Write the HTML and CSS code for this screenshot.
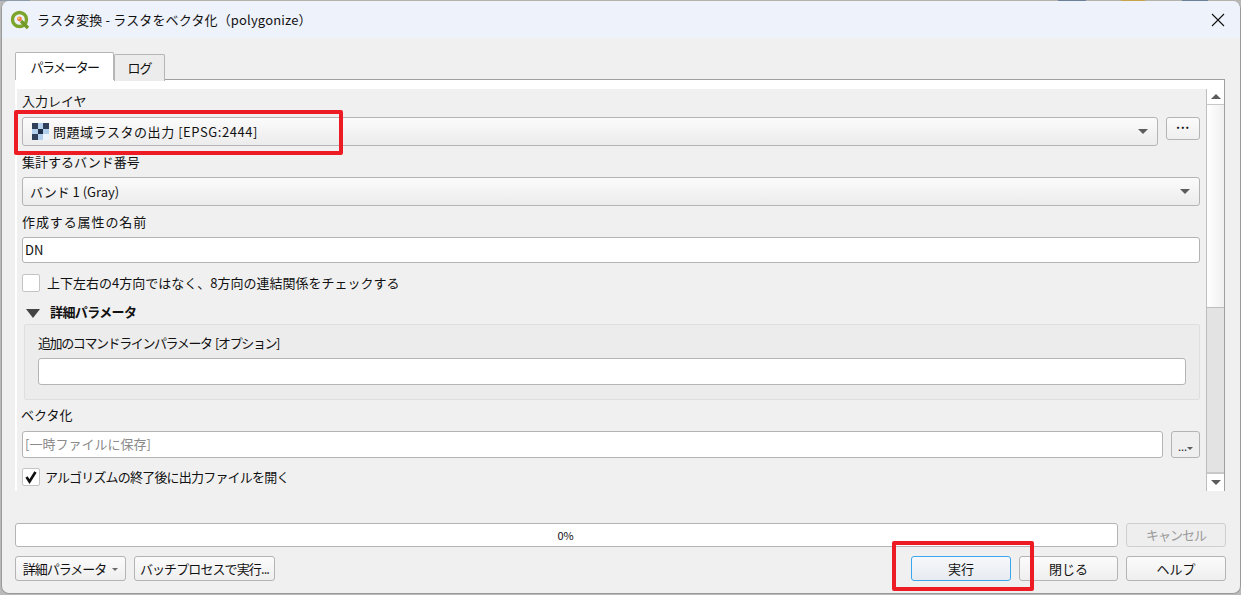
FILE: index.html
```html
<!DOCTYPE html>
<html lang="ja">

<head>
    <meta charset="UTF-8">
    <title>ラスタ変換 - ラスタをベクタ化（polygonize）</title>
    <link rel="stylesheet" href="styles.css">
</head>

<body>
    <div class="desktop-strip"></div>
    <div class="window">
        <!-- Title bar -->
        <div class="titlebar">
            <svg class="app-icon" width="20" height="20" viewBox="0 0 20 20">
                <circle cx="9.5" cy="9.5" r="7" fill="none" stroke="#7da52c" stroke-width="3.4"/>
                <path d="M11 11 L18 18" stroke="#6f9a28" stroke-width="3.4"/>
                <circle cx="9.5" cy="9" r="2.4" fill="#ee7d3b"/>
                <circle cx="8.8" cy="8.2" r="1" fill="#f7d774"/>
            </svg>
            <span class="title-text">ラスタ変換 - ラスタをベクタ化（polygonize）</span>
            <svg class="close-icon" width="14" height="14" viewBox="0 0 14 14">
                <path d="M1 1 L13 13 M13 1 L1 13" stroke="#111" stroke-width="1.1"/>
            </svg>
        </div>

        <!-- Tabs -->
        <div class="tabs">
            <div class="tab active"><span class="tight-15">パラメーター</span></div>
            <div class="tab"><span class="tight-1">ログ</span></div>
        </div>

        <div class="pane">
            <div class="params">
                <div class="label label-first">入力レイヤ</div>
                <div class="row">
                    <div class="combo grow">
                        <svg class="raster-icon" width="17" height="17" viewBox="0 0 3 3" shape-rendering="crispEdges">
                            <rect width="3" height="3" fill="#b3cfec"/>
                            <rect x="0" y="0" width="1" height="1" fill="#2f4058"/>
                            <rect x="2" y="0" width="1" height="1" fill="#2f4058"/>
                            <rect x="1" y="1" width="1" height="1" fill="#1f2f46"/>
                            <rect x="0" y="2" width="1" height="1" fill="#2f4058"/>
                            <rect x="2" y="2" width="1" height="1" fill="#eef4fb"/>
                        </svg>
                        <span class="wide-04">問題域ラスタの出力 [EPSG:2444]</span>
                        <span class="arrow"></span>
                    </div>
                    <div class="btn dots-btn">···</div>
                </div>

                <div class="label">集計するバンド番号</div>
                <div class="combo">
                    <span>バンド 1 (Gray)</span>
                    <span class="arrow"></span>
                </div>

                <div class="label wide-09">作成する属性の名前</div>
                <div class="input">DN</div>

                <div class="check-row check-first">
                    <span class="checkbox"></span>
                    <span>上下左右の4方向ではなく、8方向の連結関係をチェックする</span>
                </div>

                <div class="collapse-title">
                    <span class="collapse-arrow"></span>
                    <span class="tight-06">詳細パラメータ</span>
                </div>
                <div class="group">
                    <div class="group-label">追加のコマンドラインパラメータ [オプション]</div>
                    <div class="input tall"></div>
                </div>

                <div class="label label-vector">ベクタ化</div>
                <div class="row">
                    <div class="input grow placeholder">[一時ファイルに保存]</div>
                    <div class="btn menu-btn">...<span class="mini-arrow"></span></div>
                </div>

                <div class="check-row check-last">
                    <span class="checkbox">
                        <svg width="14" height="14" viewBox="0 0 14 14">
                            <path d="M2.5 7 L5.5 11.5 L11.5 2" fill="none" stroke="#111" stroke-width="2.6"/>
                        </svg>
                    </span>
                    <span class="tight-08">アルゴリズムの終了後に出力ファイルを開く</span>
                </div>
            </div>

            <div class="scrollbar">
                <div class="scroll-btn"><span class="arrow-up"></span></div>
                <div class="scroll-handle"></div>
                <div class="scroll-track"></div>
                <div class="scroll-btn down"><span class="arrow"></span></div>
            </div>
        </div>

        <!-- Progress and buttons -->
        <div class="progress-row">
            <div class="progress">0%</div>
            <div class="btn dialog-btn disabled"><span class="tight-1">キャンセル</span></div>
        </div>
        <div class="button-row">
            <div class="btn adv-btn"><span class="tight-1">詳細パラメータ</span><span class="small-arrow"></span></div>
            <div class="btn batch-btn"><span class="tight-09">バッチプロセスで実行...</span></div>
            <div class="spacer"></div>
            <div class="btn dialog-btn default">実行</div>
            <div class="btn dialog-btn close-btn">閉じる</div>
            <div class="btn dialog-btn">ヘルプ</div>
        </div>
    </div>

    <!-- Red annotation boxes -->
    <div class="mark mark-input"></div>
    <div class="mark mark-run"></div>
</body>

</html>
```

FILE: styles.css
```css
* {
    box-sizing: border-box;
}

html,
body {
    height: 595px;
}

body {
    margin: 0;
    overflow: hidden;
    position: relative;
    background: #b9b9b9;
    color: #111;
    font-family: "Noto Sans CJK JP", "Liberation Sans", sans-serif;
    font-size: 13px;
    line-height: 16px;
}

/* the bit of desktop showing above the dialog */
.desktop-strip {
    height: 1px;
    background: linear-gradient(to right,
        #8d9aa8 0 30px, #b3b3ac 30px 1058px,
        #6d8099 1058px 1086px, #b3b3ac 1086px 1121px,
        #c9a448 1121px 1145px, #b3b3ac 1145px 1182px,
        #6d8099 1182px 1208px, #b3b3ac 1208px);
}

.window {
    width: 1240px;
    height: 593px;
    margin-left: 1px;
    background: #f0f0f0;
    border: 1px solid #9a9a9a;
    border-top: none;
    border-radius: 8px;
    overflow: hidden;
}

.titlebar {
    height: 37px;
    display: flex;
    align-items: center;
    background: #eef2fb;
    padding: 1px 0 0 8px;
    letter-spacing: 0.15px;
}

.app-icon {
    margin-right: 7px;
}

.title-text {
    flex: 1;
}

.close-icon {
    margin-right: 15px;
}

.tabs {
    display: flex;
    height: 28px;
    margin-top: 14px;
    padding-left: 13px;
}

.tab {
    width: 51px;
    height: 27px;
    margin-top: 2px;
    padding-top: 5px;
    text-align: center;
    background: #ececec;
    border: 1px solid #b5b5b5;
    border-bottom: none;
    border-radius: 2px 2px 0 0;
}

.tab.active {
    width: 99px;
    height: 28px;
    margin-top: 0;
    padding-top: 6px;
    background: #fff;
    position: relative;
    z-index: 1;
}

.pane {
    display: flex;
    height: 412px;
    margin: -1px 15px 0 13px;
    padding: 9px 0 0 2px;
    background: #fff;
    border-top: 1px solid #a0a0a0;
    border-right: 1px solid #a0a0a0;
}

.params {
    flex: 1;
    padding: 0 6px 0 5px;
    background: #f0f0f0;
}

.label {
    margin: 8px 0 7px;
}

.label-first {
    margin: 4px 0 8px;
}

.label-vector {
    margin: 7px 0 8px -1px;
}

/* reference glyph runs are wider or narrower than Noto */
.wide-04 {
    letter-spacing: 0.55px;
}

.wide-09 {
    letter-spacing: 0.9px;
}

.tight-06 {
    letter-spacing: -0.6px;
}

.tight-08 {
    letter-spacing: -0.8px;
}

.tight-09 {
    letter-spacing: -0.9px;
    white-space: nowrap;
}

.tight-1 {
    letter-spacing: -1px;
}

.tight-15 {
    letter-spacing: -1.6px;
}

.row {
    display: flex;
    align-items: flex-start;
    gap: 8px;
}

.grow {
    flex: 1;
}

.combo {
    display: flex;
    align-items: center;
    height: 29px;
    padding: 0 9px 0 7px;
    background: linear-gradient(#fbfbfb, #ececec);
    border: 1px solid #b4b4b4;
    border-radius: 3px;
}

.combo .arrow {
    margin-left: auto;
}

.raster-icon {
    margin: 0 4px 0 2px;
}

.arrow {
    display: block;
    width: 0;
    height: 0;
    border-left: 5px solid transparent;
    border-right: 5px solid transparent;
    border-top: 5px solid #5c5c5c;
}

.arrow-up {
    display: block;
    width: 0;
    height: 0;
    border-left: 5px solid transparent;
    border-right: 5px solid transparent;
    border-bottom: 5px solid #5c5c5c;
}

.btn {
    display: flex;
    align-items: center;
    justify-content: center;
    background: linear-gradient(#fbfbfb, #efefef);
    border: 1px solid #b4b4b4;
    border-radius: 3px;
}

.dots-btn {
    width: 34px;
    height: 23px;
    font-size: 12px;
    font-weight: bold;
    letter-spacing: -2.5px;
    padding: 0 3px 3px 0;
}

.menu-btn {
    width: 29px;
    height: 27px;
    font-size: 11px;
    padding-top: 3px;
    background: #efefef;
}

.mini-arrow {
    width: 0;
    height: 0;
    margin-top: 4px;
    border-left: 3px solid transparent;
    border-right: 3px solid transparent;
    border-top: 3px solid #5c5c5c;
}

.input {
    height: 26px;
    padding: 4px 0 0 2px;
    background: #fff;
    border: 1px solid #b4b4b4;
    border-radius: 3px;
}

.input.tall {
    height: 27px;
}

.placeholder {
    height: 27px;
    color: #8a8a8a;
}

.check-row {
    display: flex;
    align-items: center;
    height: 17px;
}

.check-first {
    margin-top: 11px;
    gap: 7px;
}

.check-last {
    margin-top: 10px;
    gap: 5px;
}

.checkbox {
    display: flex;
    align-items: center;
    justify-content: center;
    width: 18px;
    height: 18px;
    background: #fff;
    border: 1px solid #c4c4c4;
    border-radius: 2px;
}

.collapse-title {
    display: flex;
    align-items: center;
    gap: 10px;
    height: 16px;
    margin: 13px 0 4px 4px;
    font-weight: bold;
}

.collapse-arrow {
    width: 0;
    height: 0;
    margin-top: 3px;
    border-left: 7px solid transparent;
    border-right: 7px solid transparent;
    border-top: 9px solid #444;
}

.group {
    height: 76px;
    margin-left: 2px;
    padding: 10px 13px 0;
    background: #ececec;
    border: 1px solid #dfdfdf;
    border-radius: 2px;
}

.group-label {
    margin-bottom: 7px;
    letter-spacing: -1.4px;
    word-spacing: 2px;
}

.scrollbar {
    display: flex;
    flex-direction: column;
    width: 18px;
    background: #fff;
    border-left: 1px solid #bdbdbd;
}

.scroll-btn {
    display: flex;
    align-items: center;
    justify-content: center;
    height: 16px;
    border-bottom: 1px solid #c8c8c8;
}

.scroll-btn.down {
    height: 19px;
    border-bottom: none;
    border-top: 2px solid #c8c8c8;
}

.scroll-handle {
    height: 203px;
    background: linear-gradient(to right, #fff, #f0f0f0);
    border-bottom: 1px solid #bdbdbd;
}

.scroll-track {
    flex: 1;
    background: #e3e3e3;
}

.progress-row,
.button-row {
    display: flex;
    padding: 0 14px 0 13px;
    gap: 8px;
}

.progress-row {
    margin-top: 32px;
}

.button-row {
    margin-top: 9px;
}

.progress {
    flex: 1;
    height: 24px;
    padding: 3px 2px 0 0;
    font-size: 11px;
    text-align: center;
    background: #fff;
    border: 1px solid #b4b4b4;
    border-radius: 3px;
}

.dialog-btn {
    width: 100px;
    height: 25px;
}

.close-btn {
    width: 99px;
}

.progress-row .dialog-btn {
    height: 24px;
}

.disabled {
    color: #9a9a9a;
    background: #eeeeee;
    border-color: #cfcfcf;
}

.default {
    background: linear-gradient(#f6f8fb, #e7ebf1);
    border-color: #3aa6f0;
}

.adv-btn {
    width: 111px;
    height: 25px;
    gap: 6px;
}

.small-arrow {
    width: 0;
    height: 0;
    margin-top: 1px;
    border-left: 3px solid transparent;
    border-right: 3px solid transparent;
    border-top: 3px solid #6a6a6a;
}

.batch-btn {
    width: 141px;
    height: 25px;
}

.spacer {
    flex: 1;
}

/* annotation rectangles sit over the dialog */
.mark {
    position: absolute;
    border: 4px solid #ed1c24;
    border-radius: 2px;
}

.mark-input {
    left: 14px;
    top: 110px;
    width: 329px;
    height: 45px;
}

.mark-run {
    left: 892px;
    top: 541px;
    width: 142px;
    height: 50px;
}
```
